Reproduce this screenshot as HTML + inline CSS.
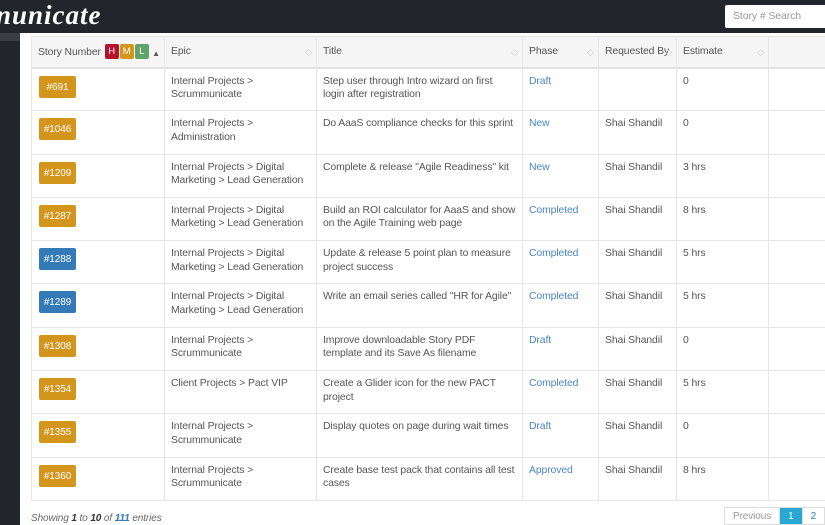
<!DOCTYPE html>
<html><head><meta charset="utf-8">
<style>
*{box-sizing:border-box;margin:0;padding:0}
body{width:825px;height:525px;overflow:hidden;background:#fff;font-family:"Liberation Sans",sans-serif;font-size:10.4px;letter-spacing:-0.1px;color:#555;position:relative}
.top{position:absolute;left:0;top:0;width:825px;height:33px;background:#22252c}
.logo{position:absolute;left:-4px;top:0px;color:#fff;font:italic bold 27px "Liberation Serif",serif;letter-spacing:1px}
.search{position:absolute;left:725px;top:5px;width:110px;height:23px;background:#fff;border-radius:2px;color:#999;font-size:10.5px;padding:5px 8px}
.side{position:absolute;left:0;top:33px;width:20px;height:492px;background:#22252c}
.side i{position:absolute;left:0;top:0;width:20px;height:8px;background:#3a3d44}
table{position:absolute;left:31px;top:36px;width:817px;border-collapse:collapse;table-layout:fixed;border-top:1px solid #e4e4e4}
td,th{border:1px solid #e6e6e6;vertical-align:top;text-align:left;font-weight:normal;line-height:13.5px}
th{height:31px;background:#f5f5f5;padding:8px 6px 0;color:#555;position:relative;border-bottom:2px solid #e2e2e2;white-space:nowrap;overflow:hidden}
th .s{position:absolute;right:4px;top:9px;color:#ccc;font-size:9px}
td{height:43.3px;padding:6px 6px 0}
.b{display:inline-block;width:37px;height:22px;border-radius:2px;color:#fff;text-align:center;line-height:23px;font-size:10px;background:#d4951d;margin-top:1px;margin-left:1px}
.bl{background:#337ab7}
.p{color:#4a86c5}
.c{display:inline-block;width:14px;height:15px;color:#fff;text-align:center;line-height:15px;font-size:9.5px;border-radius:2px;margin-left:1px;position:relative;top:-1px}
.foot{position:absolute;left:31px;top:513px;font-style:italic;font-size:10px;color:#666}
.foot b{color:#333}.foot a{color:#337ab7;font-weight:bold}
.pg{position:absolute;left:724px;top:507px;height:18px;display:flex;border:1px solid #ddd;border-right:none}
.pg span{padding:3px 8px;font-size:10px;color:#337ab7;border-right:1px solid #ddd}
</style></head><body>
<div class="top"><div class="logo">nunicate</div><div class="search">Story # Search</div></div>
<div class="side"><i></i></div>
<table>
<colgroup><col style="width:133px"><col style="width:152px"><col style="width:206px"><col style="width:76px"><col style="width:78px"><col style="width:92px"><col style="width:80px"></colgroup>
<tr><th>Story Number <span class="c" style="background:#b5122b">H</span><span class="c" style="background:#d4951d">M</span><span class="c" style="background:#5ea36a">L</span><span class="s" style="color:#555;font-size:8px;top:10px">▲</span></th><th>Epic<span class="s">◇</span></th><th>Title<span class="s">◇</span></th><th>Phase<span class="s">◇</span></th><th>Requested By<span class="s">◇</span></th><th>Estimate<span class="s">◇</span></th><th></th></tr>
<tr><td><span class="b">#691</span></td><td>Internal Projects &gt;<br>Scrummunicate</td><td>Step user through Intro wizard on first login after registration</td><td class="p">Draft</td><td></td><td>0</td><td></td></tr>
<tr><td><span class="b">#1046</span></td><td>Internal Projects &gt;<br>Administration</td><td>Do AaaS compliance checks for this sprint</td><td class="p">New</td><td>Shai Shandil</td><td>0</td><td></td></tr>
<tr><td><span class="b">#1209</span></td><td>Internal Projects &gt; Digital Marketing &gt; Lead Generation</td><td>Complete &amp; release "Agile Readiness" kit</td><td class="p">New</td><td>Shai Shandil</td><td>3 hrs</td><td></td></tr>
<tr><td><span class="b">#1287</span></td><td>Internal Projects &gt; Digital Marketing &gt; Lead Generation</td><td>Build an ROI calculator for AaaS and show on the Agile Training web page</td><td class="p">Completed</td><td>Shai Shandil</td><td>8 hrs</td><td></td></tr>
<tr><td><span class="b bl">#1288</span></td><td>Internal Projects &gt; Digital Marketing &gt; Lead Generation</td><td>Update &amp; release 5 point plan to measure project success</td><td class="p">Completed</td><td>Shai Shandil</td><td>5 hrs</td><td></td></tr>
<tr><td><span class="b bl">#1289</span></td><td>Internal Projects &gt; Digital Marketing &gt; Lead Generation</td><td>Write an email series called "HR for Agile"</td><td class="p">Completed</td><td>Shai Shandil</td><td>5 hrs</td><td></td></tr>
<tr><td><span class="b">#1308</span></td><td>Internal Projects &gt;<br>Scrummunicate</td><td>Improve downloadable Story PDF template and its Save As filename</td><td class="p">Draft</td><td>Shai Shandil</td><td>0</td><td></td></tr>
<tr><td><span class="b">#1354</span></td><td>Client Projects &gt; Pact VIP</td><td>Create a Glider icon for the new PACT project</td><td class="p">Completed</td><td>Shai Shandil</td><td>5 hrs</td><td></td></tr>
<tr><td><span class="b">#1355</span></td><td>Internal Projects &gt;<br>Scrummunicate</td><td>Display quotes on page during wait times</td><td class="p">Draft</td><td>Shai Shandil</td><td>0</td><td></td></tr>
<tr><td><span class="b">#1360</span></td><td>Internal Projects &gt;<br>Scrummunicate</td><td>Create base test pack that contains all test cases</td><td class="p">Approved</td><td>Shai Shandil</td><td>8 hrs</td><td></td></tr>
</table>
<div class="foot">Showing <b>1</b> to <b>10</b> of <a>111</a> entries</div>
<div class="pg"><span style="color:#999">Previous</span><span style="background:#29a8d4;color:#fff">1</span><span>2</span><span>3</span></div>
</body></html>
